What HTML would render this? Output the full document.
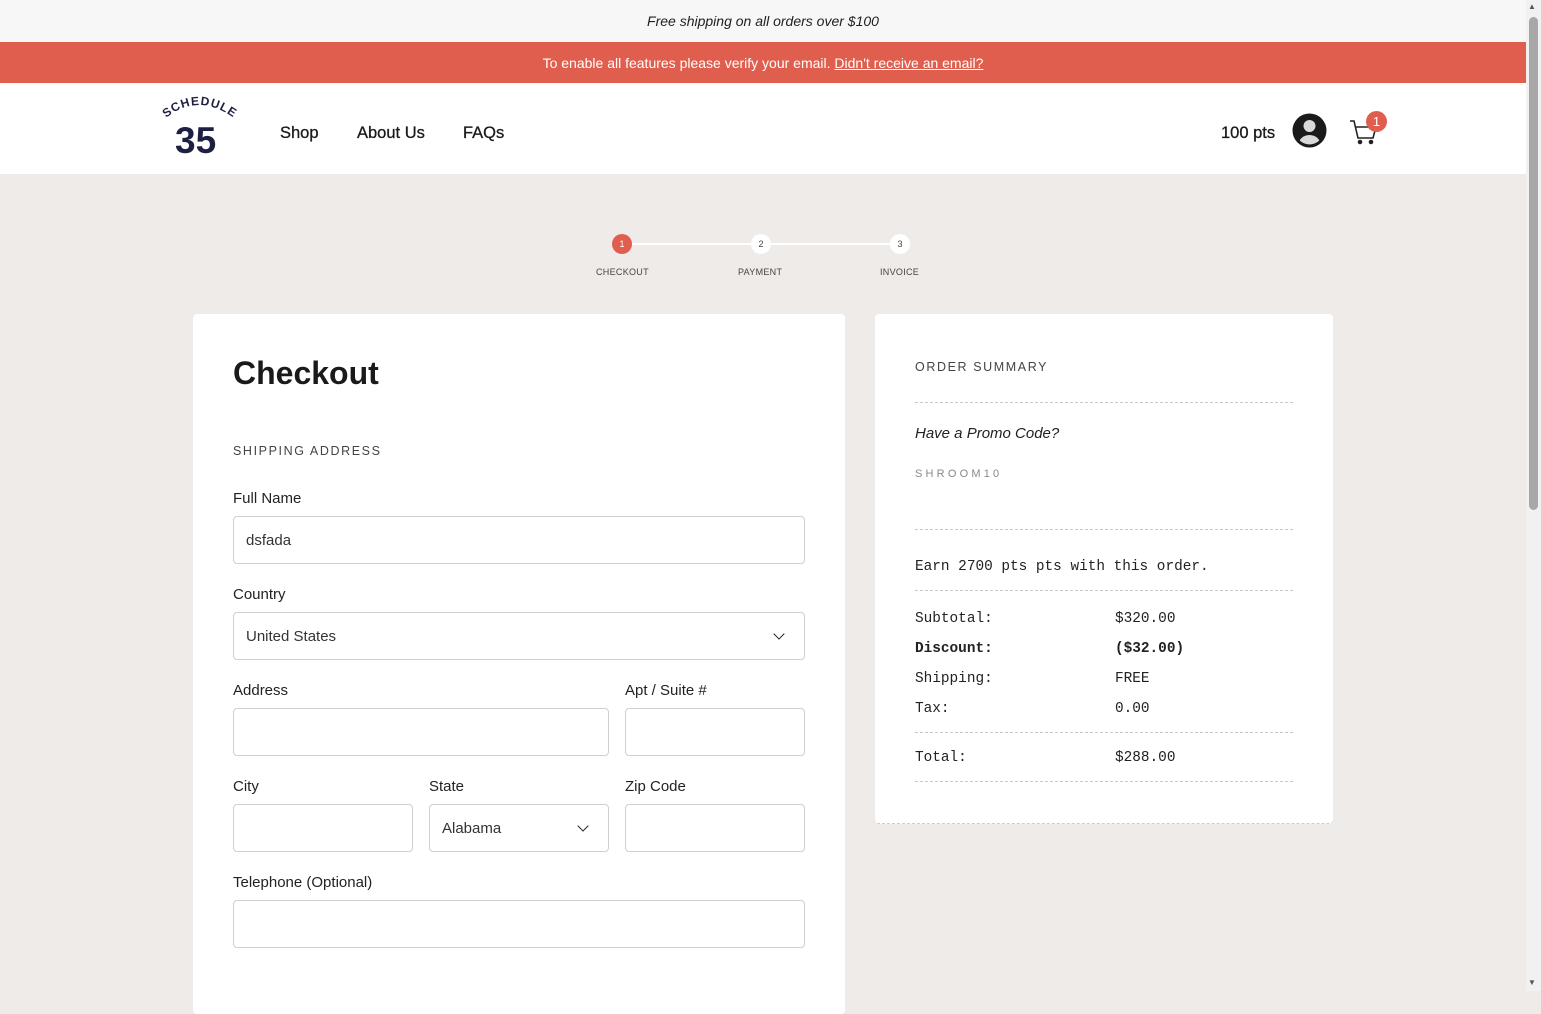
<!DOCTYPE html>
<html><head><meta charset="utf-8"><style>
*{box-sizing:border-box;margin:0;padding:0}
body{width:1541px;height:991px;overflow:hidden;background:#efebe8;font-family:"Liberation Sans",sans-serif;color:#222;position:relative}
.abs{position:absolute}
.top{left:0;top:0;width:1526px;height:42px;background:#f7f7f7;text-align:center;font-style:italic;font-size:14px;line-height:42px;color:#222}
.red{left:0;top:42px;width:1526px;height:41px;background:#e05e4d;color:#fff;text-align:center;font-size:14px;line-height:42px}
.hdr{left:0;top:83px;width:1526px;height:91px;background:#fff}
.nav{font-size:16.5px;color:#1a1a1a;top:124px;-webkit-text-stroke:0.3px #1a1a1a}
.sb{left:1526px;top:0;width:15px;height:991px;background:#f1f1f1}
.thumb{left:1529px;top:17px;width:9px;height:493px;background:#a8a8a8;border-radius:5px}
.card{background:#fff;border-radius:4px}
.lbl{font-size:15px;color:#222}
.inp{border:1px solid #cfcfcf;border-radius:4px;background:#fff;height:48px;font-size:15px;line-height:48px;padding-left:12px;color:#333}
.cap{font-size:12.5px;letter-spacing:1.6px;color:#444}
.mono{font-family:"Liberation Mono",monospace;font-size:14.4px;color:#222}
.dash{border-top:1px dashed #c8c8c8;width:378px;left:915px}
.step{font-size:9px;color:#444;letter-spacing:.3px}
.dot{width:20px;height:20px;border-radius:50%;font-size:9px;text-align:center;line-height:20px}
.chev{width:8px;height:8px;border-right:1.5px solid #222;border-bottom:1.5px solid #222;transform:rotate(45deg)}
</style></head><body>
<div class="abs top">Free shipping on all orders over $100</div>
<div class="abs red">To enable all features please verify your email. <u>Didn't receive an email?</u></div>
<div class="abs hdr"></div>
<svg class="abs" style="left:158px;top:94px" width="82" height="66" viewBox="0 0 82 66">
<path id="arc" d="M8 24 Q40 -2 76 24" fill="none"/>
<text font-family="Liberation Sans" font-weight="bold" font-size="12" fill="#1d2040" letter-spacing="1"><textPath href="#arc">SCHEDULE</textPath></text>
<text x="17" y="59" font-family="Liberation Sans" font-weight="bold" font-size="37" fill="#1d2040">35</text>
</svg>
<div class="abs nav" style="left:280px">Shop</div>
<div class="abs nav" style="left:357px">About Us</div>
<div class="abs nav" style="left:463px">FAQs</div>
<div class="abs nav" style="left:1221px">100 pts</div>
<svg class="abs" style="left:1292px;top:113px" width="35" height="35" viewBox="0 0 35 35">
<circle cx="17.5" cy="17.5" r="17" fill="#1a1a1a"/>
<clipPath id="c"><circle cx="17.5" cy="17.5" r="14"/></clipPath>
<g clip-path="url(#c)" fill="#d9d9d9"><circle cx="17.5" cy="13" r="6"/><ellipse cx="17.5" cy="32" rx="11" ry="10"/></g>
</svg>
<svg class="abs" style="left:1348px;top:116px" width="32" height="32" viewBox="0 0 32 32" fill="none" stroke="#222" stroke-width="1.6">
<path d="M2 5h4l4 17h15l3-11H8"/><circle cx="12" cy="26" r="1.5" fill="#222"/><circle cx="23" cy="26" r="1.5" fill="#222"/>
</svg>
<div class="abs" style="left:1366px;top:111px;width:21px;height:21px;border-radius:50%;background:#e05e4d;color:#fff;font-size:13px;text-align:center;line-height:21px">1</div>

<div class="abs" style="left:622px;top:243px;width:278px;height:2px;background:#fff"></div>
<div class="abs dot" style="left:612px;top:234px;background:#e05e4d;color:#fff">1</div>
<div class="abs dot" style="left:751px;top:234px;background:#fff;color:#444">2</div>
<div class="abs dot" style="left:890px;top:234px;background:#fff;color:#444">3</div>
<div class="abs step" style="left:596px;top:267px">CHECKOUT</div>
<div class="abs step" style="left:738px;top:267px">PAYMENT</div>
<div class="abs step" style="left:880px;top:267px">INVOICE</div>

<div class="abs card" style="left:193px;top:314px;width:652px;height:700px"></div>
<div class="abs" style="left:233px;top:355px;font-size:32px;font-weight:bold;color:#1a1a1a">Checkout</div>
<div class="abs cap" style="left:233px;top:444px">SHIPPING ADDRESS</div>
<div class="abs lbl" style="left:233px;top:490px">Full Name</div>
<div class="abs inp" style="left:233px;top:516px;width:572px">dsfada</div>
<div class="abs lbl" style="left:233px;top:586px">Country</div>
<div class="abs inp" style="left:233px;top:612px;width:572px">United States</div>
<div class="abs chev" style="left:775px;top:630px"></div>
<div class="abs lbl" style="left:233px;top:682px">Address</div>
<div class="abs lbl" style="left:625px;top:682px">Apt / Suite #</div>
<div class="abs inp" style="left:233px;top:708px;width:376px"></div>
<div class="abs inp" style="left:625px;top:708px;width:180px"></div>
<div class="abs lbl" style="left:233px;top:778px">City</div>
<div class="abs lbl" style="left:429px;top:778px">State</div>
<div class="abs lbl" style="left:625px;top:778px">Zip Code</div>
<div class="abs inp" style="left:233px;top:804px;width:180px"></div>
<div class="abs inp" style="left:429px;top:804px;width:180px">Alabama</div>
<div class="abs chev" style="left:579px;top:822px"></div>
<div class="abs inp" style="left:625px;top:804px;width:180px"></div>
<div class="abs lbl" style="left:233px;top:874px">Telephone (Optional)</div>
<div class="abs inp" style="left:233px;top:900px;width:572px"></div>

<div class="abs card" style="left:875px;top:314px;width:458px;height:510px;border-bottom:1px dashed #ccc"></div>
<div class="abs cap" style="left:915px;top:360px">ORDER SUMMARY</div>
<div class="abs dash" style="top:402px"></div>
<div class="abs" style="left:915px;top:425px;font-size:15px;font-style:italic;color:#222">Have a Promo Code?</div>
<div class="abs" style="left:915px;top:468px;font-size:11px;letter-spacing:3.2px;color:#888">SHROOM10</div>
<div class="abs dash" style="top:529px"></div>
<div class="abs mono" style="left:915px;top:559px">Earn 2700 pts pts with this order.</div>
<div class="abs dash" style="top:590px"></div>
<div class="abs mono" style="left:915px;top:611px">Subtotal:</div><div class="abs mono" style="left:1115px;top:611px">$320.00</div>
<div class="abs mono" style="left:915px;top:641px;font-weight:bold">Discount:</div><div class="abs mono" style="left:1115px;top:641px;font-weight:bold">($32.00)</div>
<div class="abs mono" style="left:915px;top:671px">Shipping:</div><div class="abs mono" style="left:1115px;top:671px">FREE</div>
<div class="abs mono" style="left:915px;top:701px">Tax:</div><div class="abs mono" style="left:1115px;top:701px">0.00</div>
<div class="abs dash" style="top:732px"></div>
<div class="abs mono" style="left:915px;top:750px">Total:</div><div class="abs mono" style="left:1115px;top:750px">$288.00</div>
<div class="abs dash" style="top:781px"></div>

<div class="abs sb"></div><div class="abs thumb"></div>
<div class="abs" style="left:1528px;top:2px;font-size:8px;color:#555">▲</div>
<div class="abs" style="left:1528px;top:978px;font-size:8px;color:#555">▼</div>
</body></html>
